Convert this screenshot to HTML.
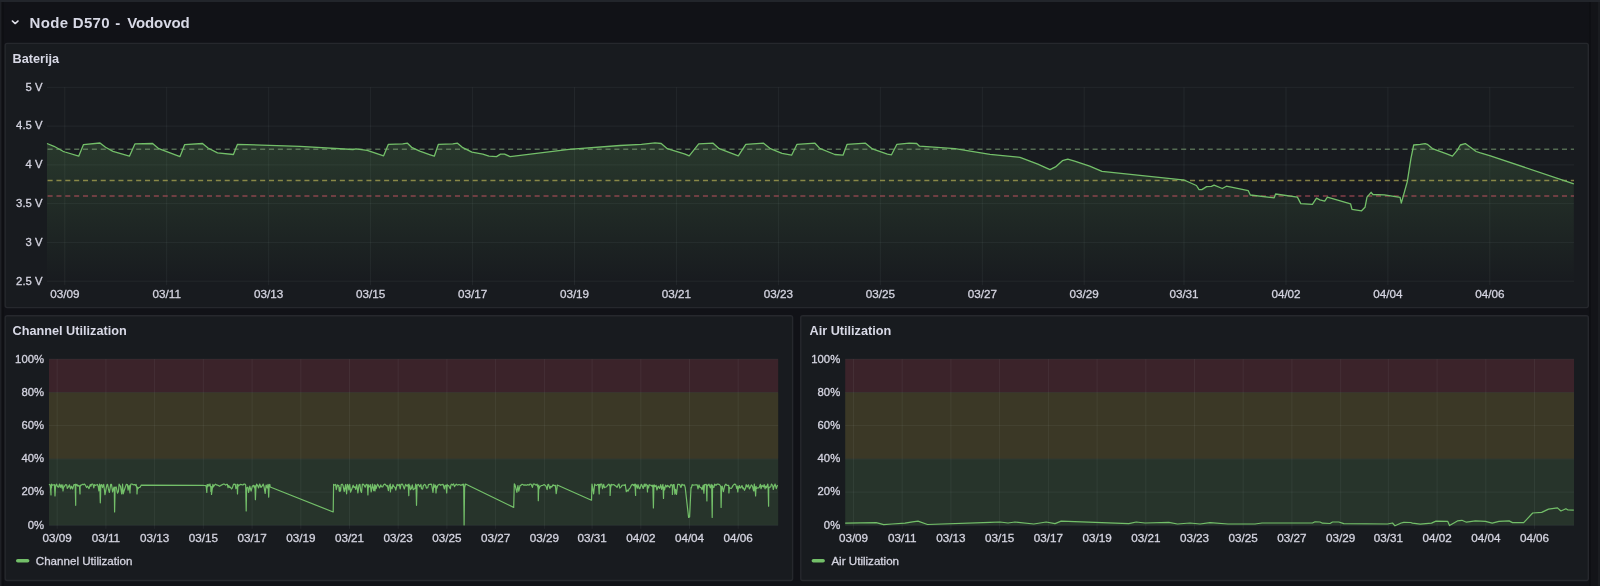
<!DOCTYPE html>
<html><head><meta charset="utf-8"><title>Node D570 - Vodovod</title>
<style>
html,body{margin:0;padding:0;width:1600px;height:586px;overflow:hidden;background:#111217;}
svg{display:block;font-family:"Liberation Sans", sans-serif;will-change:transform;}
.hd{font-size:15px;font-weight:bold;fill:#d8d9e6;}
.pt{font-size:12.7px;font-weight:bold;fill:#d8d9e6;}
.ax{font-size:11.3px;fill:#d4d4e0;stroke:#d4d4e0;stroke-width:0.3px;}
.lg{font-size:11.6px;fill:#d4d4e0;stroke:#d4d4e0;stroke-width:0.3px;}
.axx{font-size:11.7px;fill:#d4d4e0;stroke:#d4d4e0;stroke-width:0.3px;}
</style></head><body>
<svg width="1600" height="586" viewBox="0 0 1600 586">
<defs><linearGradient id="gfill" gradientUnits="userSpaceOnUse" x1="0" y1="87.3" x2="0" y2="281.2"><stop offset="0" stop-color="#73bf69" stop-opacity="0.25"/><stop offset="1" stop-color="#73bf69" stop-opacity="0"/></linearGradient></defs>
<rect x="0" y="0" width="1600" height="2" fill="#22252b"/>
<rect x="0" y="2" width="1" height="584" fill="#1e2025"/><rect x="1" y="2" width="1" height="584" fill="#15161a"/><rect x="2" y="2" width="2" height="584" fill="#0e0f13"/>
<rect x="1589" y="2" width="2" height="584" fill="#0e0f13"/><rect x="1591" y="2" width="7" height="584" fill="#131418"/><rect x="1598" y="2" width="2" height="584" fill="#1a1c20"/>
<path d="M12.3,20.9 L15.2,23.6 L18.1,20.9" fill="none" stroke="#e2e2ec" stroke-width="1.45" stroke-linecap="round" stroke-linejoin="round"/>
<text x="29.6" y="27.5" class="hd" letter-spacing="0.3">Node D570</text><text x="115.3" y="27.5" class="hd">-</text><text x="127.2" y="27.5" class="hd" letter-spacing="-0.1">Vodovod</text>
<rect x="5.2" y="43.4" width="1583.1" height="264.2" rx="2" fill="#181b1f" stroke="#26282d" stroke-width="1.4"/>
<text x="12.5" y="62.8" class="pt">Baterija</text>
<line x1="47" y1="87.3" x2="1574" y2="87.3" stroke="rgba(240,250,255,0.055)"/>
<text x="42.5" y="90.6" class="ax" text-anchor="end">5 V</text>
<line x1="47" y1="126.1" x2="1574" y2="126.1" stroke="rgba(240,250,255,0.055)"/>
<text x="42.5" y="129.4" class="ax" text-anchor="end">4.5 V</text>
<line x1="47" y1="164.9" x2="1574" y2="164.9" stroke="rgba(240,250,255,0.055)"/>
<text x="42.5" y="168.2" class="ax" text-anchor="end">4 V</text>
<line x1="47" y1="203.6" x2="1574" y2="203.6" stroke="rgba(240,250,255,0.055)"/>
<text x="42.5" y="206.9" class="ax" text-anchor="end">3.5 V</text>
<line x1="47" y1="242.4" x2="1574" y2="242.4" stroke="rgba(240,250,255,0.055)"/>
<text x="42.5" y="245.7" class="ax" text-anchor="end">3 V</text>
<line x1="47" y1="281.2" x2="1574" y2="281.2" stroke="rgba(240,250,255,0.055)"/>
<text x="42.5" y="284.5" class="ax" text-anchor="end">2.5 V</text>
<line x1="64.8" y1="87.3" x2="64.8" y2="285.2" stroke="rgba(240,250,255,0.055)"/>
<text x="64.8" y="297.6" class="axx" text-anchor="middle">03/09</text>
<line x1="166.7" y1="87.3" x2="166.7" y2="285.2" stroke="rgba(240,250,255,0.055)"/>
<text x="166.7" y="297.6" class="axx" text-anchor="middle">03/11</text>
<line x1="268.7" y1="87.3" x2="268.7" y2="285.2" stroke="rgba(240,250,255,0.055)"/>
<text x="268.7" y="297.6" class="axx" text-anchor="middle">03/13</text>
<line x1="370.6" y1="87.3" x2="370.6" y2="285.2" stroke="rgba(240,250,255,0.055)"/>
<text x="370.6" y="297.6" class="axx" text-anchor="middle">03/15</text>
<line x1="472.6" y1="87.3" x2="472.6" y2="285.2" stroke="rgba(240,250,255,0.055)"/>
<text x="472.6" y="297.6" class="axx" text-anchor="middle">03/17</text>
<line x1="574.5" y1="87.3" x2="574.5" y2="285.2" stroke="rgba(240,250,255,0.055)"/>
<text x="574.5" y="297.6" class="axx" text-anchor="middle">03/19</text>
<line x1="676.4" y1="87.3" x2="676.4" y2="285.2" stroke="rgba(240,250,255,0.055)"/>
<text x="676.4" y="297.6" class="axx" text-anchor="middle">03/21</text>
<line x1="778.4" y1="87.3" x2="778.4" y2="285.2" stroke="rgba(240,250,255,0.055)"/>
<text x="778.4" y="297.6" class="axx" text-anchor="middle">03/23</text>
<line x1="880.3" y1="87.3" x2="880.3" y2="285.2" stroke="rgba(240,250,255,0.055)"/>
<text x="880.3" y="297.6" class="axx" text-anchor="middle">03/25</text>
<line x1="982.3" y1="87.3" x2="982.3" y2="285.2" stroke="rgba(240,250,255,0.055)"/>
<text x="982.3" y="297.6" class="axx" text-anchor="middle">03/27</text>
<line x1="1084.2" y1="87.3" x2="1084.2" y2="285.2" stroke="rgba(240,250,255,0.055)"/>
<text x="1084.2" y="297.6" class="axx" text-anchor="middle">03/29</text>
<line x1="1184.0" y1="87.3" x2="1184.0" y2="285.2" stroke="rgba(240,250,255,0.055)"/>
<text x="1184.0" y="297.6" class="axx" text-anchor="middle">03/31</text>
<line x1="1286.0" y1="87.3" x2="1286.0" y2="285.2" stroke="rgba(240,250,255,0.055)"/>
<text x="1286.0" y="297.6" class="axx" text-anchor="middle">04/02</text>
<line x1="1387.9" y1="87.3" x2="1387.9" y2="285.2" stroke="rgba(240,250,255,0.055)"/>
<text x="1387.9" y="297.6" class="axx" text-anchor="middle">04/04</text>
<line x1="1489.8" y1="87.3" x2="1489.8" y2="285.2" stroke="rgba(240,250,255,0.055)"/>
<text x="1489.8" y="297.6" class="axx" text-anchor="middle">04/06</text>
<polygon points="47.0,143.5 54.0,146.3 63.0,151.3 65.0,152.0 78.7,156.2 83.5,144.6 100.0,143.0 105.5,147.3 113.0,151.4 129.4,156.2 134.9,143.9 152.6,143.5 158.8,148.7 180.0,156.6 184.7,144.6 202.5,143.5 208.0,148.0 217.5,152.8 233.4,154.5 237.5,144.3 300.0,146.3 352.9,149.5 356.0,148.8 367.2,150.3 383.6,155.8 388.4,144.3 402.7,143.9 407.5,143.2 411.6,147.3 419.8,151.1 430.2,154.8 434.3,156.2 438.4,144.3 452.8,143.9 457.5,143.2 462.3,147.3 471.9,152.1 482.8,154.1 489.0,156.2 496.5,156.6 500.5,154.1 504.6,154.1 510.1,156.6 569.0,149.3 620.0,145.5 641.4,144.3 655.0,142.9 661.2,143.5 667.3,148.7 685.1,154.1 689.2,155.9 698.7,143.9 713.1,143.2 719.2,148.7 738.3,155.8 745.8,144.3 763.6,143.2 770.4,148.7 782.0,153.4 791.6,155.2 797.0,144.3 815.0,143.2 819.8,148.4 834.8,154.5 843.0,155.2 847.1,144.3 865.5,143.2 872.4,148.9 887.4,154.1 891.5,154.8 896.9,144.3 909.2,143.2 916.7,143.5 919.5,146.2 955.0,148.7 990.0,154.3 1020.0,157.3 1037.8,164.1 1050.0,169.6 1055.5,166.9 1062.4,160.7 1067.8,159.1 1074.6,161.1 1089.7,166.2 1102.0,171.4 1182.5,179.8 1184.0,180.0 1196.4,185.5 1199.1,189.6 1201.8,189.6 1206.6,186.6 1211.4,186.3 1214.1,185.2 1222.3,188.5 1226.4,186.2 1248.3,190.7 1250.3,195.0 1274.2,197.8 1275.6,194.0 1297.4,197.1 1300.8,203.6 1312.4,204.3 1316.5,198.1 1319.9,199.8 1324.7,201.2 1327.4,197.1 1350.6,203.9 1352.0,209.4 1361.6,210.8 1365.0,207.3 1367.0,197.1 1371.1,192.3 1372.9,194.5 1384.3,194.8 1400.1,197.4 1401.3,203.1 1407.3,181.6 1410.9,158.7 1413.7,145.0 1420.2,144.3 1425.2,143.6 1427.3,144.3 1432.4,148.6 1447.4,154.1 1452.4,156.1 1457.4,150.1 1460.3,145.0 1465.3,143.6 1476.1,151.5 1480.4,152.9 1490.4,155.8 1573.8,183.8 1573.8,281.2 47.0,281.2" fill="url(#gfill)"/>
<line x1="47.58" y1="149.3" x2="1574" y2="149.3" stroke="rgba(135,175,125,0.55)" stroke-width="1.45" stroke-dasharray="5.05,3.806"/>
<line x1="47.58" y1="180.4" x2="1574" y2="180.4" stroke="rgba(200,190,90,0.62)" stroke-width="1.45" stroke-dasharray="5.05,3.806"/>
<line x1="47.58" y1="195.9" x2="1574" y2="195.9" stroke="rgba(200,85,100,0.62)" stroke-width="1.45" stroke-dasharray="5.05,3.806"/>
<polyline points="47.0,143.5 54.0,146.3 63.0,151.3 65.0,152.0 78.7,156.2 83.5,144.6 100.0,143.0 105.5,147.3 113.0,151.4 129.4,156.2 134.9,143.9 152.6,143.5 158.8,148.7 180.0,156.6 184.7,144.6 202.5,143.5 208.0,148.0 217.5,152.8 233.4,154.5 237.5,144.3 300.0,146.3 352.9,149.5 356.0,148.8 367.2,150.3 383.6,155.8 388.4,144.3 402.7,143.9 407.5,143.2 411.6,147.3 419.8,151.1 430.2,154.8 434.3,156.2 438.4,144.3 452.8,143.9 457.5,143.2 462.3,147.3 471.9,152.1 482.8,154.1 489.0,156.2 496.5,156.6 500.5,154.1 504.6,154.1 510.1,156.6 569.0,149.3 620.0,145.5 641.4,144.3 655.0,142.9 661.2,143.5 667.3,148.7 685.1,154.1 689.2,155.9 698.7,143.9 713.1,143.2 719.2,148.7 738.3,155.8 745.8,144.3 763.6,143.2 770.4,148.7 782.0,153.4 791.6,155.2 797.0,144.3 815.0,143.2 819.8,148.4 834.8,154.5 843.0,155.2 847.1,144.3 865.5,143.2 872.4,148.9 887.4,154.1 891.5,154.8 896.9,144.3 909.2,143.2 916.7,143.5 919.5,146.2 955.0,148.7 990.0,154.3 1020.0,157.3 1037.8,164.1 1050.0,169.6 1055.5,166.9 1062.4,160.7 1067.8,159.1 1074.6,161.1 1089.7,166.2 1102.0,171.4 1182.5,179.8 1184.0,180.0 1196.4,185.5 1199.1,189.6 1201.8,189.6 1206.6,186.6 1211.4,186.3 1214.1,185.2 1222.3,188.5 1226.4,186.2 1248.3,190.7 1250.3,195.0 1274.2,197.8 1275.6,194.0 1297.4,197.1 1300.8,203.6 1312.4,204.3 1316.5,198.1 1319.9,199.8 1324.7,201.2 1327.4,197.1 1350.6,203.9 1352.0,209.4 1361.6,210.8 1365.0,207.3 1367.0,197.1 1371.1,192.3 1372.9,194.5 1384.3,194.8 1400.1,197.4 1401.3,203.1 1407.3,181.6 1410.9,158.7 1413.7,145.0 1420.2,144.3 1425.2,143.6 1427.3,144.3 1432.4,148.6 1447.4,154.1 1452.4,156.1 1457.4,150.1 1460.3,145.0 1465.3,143.6 1476.1,151.5 1480.4,152.9 1490.4,155.8 1573.8,183.8" fill="none" stroke="#73bf69" stroke-width="1.3" stroke-linejoin="round"/>
<rect x="5.20" y="315.8" width="787.40" height="264.7" rx="2" fill="#181b1f" stroke="#26282d" stroke-width="1.4"/>
<text x="12.5" y="335.2" class="pt">Channel Utilization</text>
<rect x="49" y="359.2" width="729.2" height="33.2" fill="#3b232a"/>
<rect x="49" y="392.4" width="729.2" height="66.4" fill="#3b3826"/>
<rect x="49" y="458.9" width="729.2" height="66.4" fill="#27342b"/>
<line x1="49" y1="359.2" x2="778.2" y2="359.2" stroke="rgba(240,250,255,0.055)"/>
<text x="44.0" y="362.5" class="ax" text-anchor="end">100%</text>
<line x1="49" y1="392.4" x2="778.2" y2="392.4" stroke="rgba(240,250,255,0.055)"/>
<text x="44.0" y="395.7" class="ax" text-anchor="end">80%</text>
<line x1="49" y1="425.6" x2="778.2" y2="425.6" stroke="rgba(240,250,255,0.055)"/>
<text x="44.0" y="428.9" class="ax" text-anchor="end">60%</text>
<line x1="49" y1="458.9" x2="778.2" y2="458.9" stroke="rgba(240,250,255,0.055)"/>
<text x="44.0" y="462.2" class="ax" text-anchor="end">40%</text>
<line x1="49" y1="492.1" x2="778.2" y2="492.1" stroke="rgba(240,250,255,0.055)"/>
<text x="44.0" y="495.4" class="ax" text-anchor="end">20%</text>
<line x1="49" y1="525.3" x2="778.2" y2="525.3" stroke="rgba(240,250,255,0.055)"/>
<text x="44.0" y="528.6" class="ax" text-anchor="end">0%</text>
<line x1="57.2" y1="359.2" x2="57.2" y2="528.8" stroke="rgba(240,250,255,0.055)"/>
<text x="57.2" y="541.8" class="axx" text-anchor="middle">03/09</text>
<line x1="105.9" y1="359.2" x2="105.9" y2="528.8" stroke="rgba(240,250,255,0.055)"/>
<text x="105.9" y="541.8" class="axx" text-anchor="middle">03/11</text>
<line x1="154.6" y1="359.2" x2="154.6" y2="528.8" stroke="rgba(240,250,255,0.055)"/>
<text x="154.6" y="541.8" class="axx" text-anchor="middle">03/13</text>
<line x1="203.3" y1="359.2" x2="203.3" y2="528.8" stroke="rgba(240,250,255,0.055)"/>
<text x="203.3" y="541.8" class="axx" text-anchor="middle">03/15</text>
<line x1="252.1" y1="359.2" x2="252.1" y2="528.8" stroke="rgba(240,250,255,0.055)"/>
<text x="252.1" y="541.8" class="axx" text-anchor="middle">03/17</text>
<line x1="300.8" y1="359.2" x2="300.8" y2="528.8" stroke="rgba(240,250,255,0.055)"/>
<text x="300.8" y="541.8" class="axx" text-anchor="middle">03/19</text>
<line x1="349.5" y1="359.2" x2="349.5" y2="528.8" stroke="rgba(240,250,255,0.055)"/>
<text x="349.5" y="541.8" class="axx" text-anchor="middle">03/21</text>
<line x1="398.2" y1="359.2" x2="398.2" y2="528.8" stroke="rgba(240,250,255,0.055)"/>
<text x="398.2" y="541.8" class="axx" text-anchor="middle">03/23</text>
<line x1="446.9" y1="359.2" x2="446.9" y2="528.8" stroke="rgba(240,250,255,0.055)"/>
<text x="446.9" y="541.8" class="axx" text-anchor="middle">03/25</text>
<line x1="495.6" y1="359.2" x2="495.6" y2="528.8" stroke="rgba(240,250,255,0.055)"/>
<text x="495.6" y="541.8" class="axx" text-anchor="middle">03/27</text>
<line x1="544.4" y1="359.2" x2="544.4" y2="528.8" stroke="rgba(240,250,255,0.055)"/>
<text x="544.4" y="541.8" class="axx" text-anchor="middle">03/29</text>
<line x1="592.1" y1="359.2" x2="592.1" y2="528.8" stroke="rgba(240,250,255,0.055)"/>
<text x="592.1" y="541.8" class="axx" text-anchor="middle">03/31</text>
<line x1="640.8" y1="359.2" x2="640.8" y2="528.8" stroke="rgba(240,250,255,0.055)"/>
<text x="640.8" y="541.8" class="axx" text-anchor="middle">04/02</text>
<line x1="689.5" y1="359.2" x2="689.5" y2="528.8" stroke="rgba(240,250,255,0.055)"/>
<text x="689.5" y="541.8" class="axx" text-anchor="middle">04/04</text>
<line x1="738.2" y1="359.2" x2="738.2" y2="528.8" stroke="rgba(240,250,255,0.055)"/>
<text x="738.2" y="541.8" class="axx" text-anchor="middle">04/06</text>
<polyline points="49.0,484.2 50.1,484.9 50.5,487.6 51.0,495.0 51.0,484.8 51.5,487.8 51.6,484.1 52.3,485.3 53.0,485.0 54.4,484.6 54.5,485.8 55.0,496.0 55.5,486.7 55.8,485.4 56.6,484.2 57.4,486.5 58.5,487.1 59.5,484.1 60.3,487.3 61.2,484.7 62.0,488.1 62.5,487.8 62.8,484.8 63.0,491.0 63.5,487.5 64.1,486.9 65.5,484.7 66.7,484.8 67.3,488.3 68.4,486.9 69.5,484.9 70.5,488.8 71.5,486.2 72.6,489.0 73.9,484.6 75.0,484.7 75.2,485.4 75.7,505.3 75.8,484.1 76.2,485.4 77.0,484.4 77.9,486.2 78.8,485.4 79.5,486.3 80.0,494.0 80.1,486.8 80.5,485.2 81.0,485.4 82.4,484.3 83.2,484.8 84.3,484.0 85.2,484.9 86.6,487.5 87.6,486.2 89.0,488.6 90.2,484.6 90.9,486.2 91.5,484.3 92.4,484.0 93.1,484.6 93.8,487.8 94.5,484.6 95.4,485.4 96.8,484.8 97.4,484.5 98.2,486.5 98.9,490.8 99.6,484.0 99.8,485.7 100.3,502.8 100.6,494.6 100.8,485.2 101.8,484.6 102.5,487.6 103.7,484.4 105.0,494.6 106.2,488.2 107.0,484.6 107.6,484.4 108.4,488.9 109.4,492.5 110.7,484.4 111.5,484.3 112.6,491.9 113.6,488.4 114.1,487.0 114.3,488.7 114.6,512.0 115.1,487.4 115.5,487.4 116.2,487.0 117.5,493.2 118.4,491.5 119.1,484.2 120.5,486.4 121.7,494.0 122.6,484.2 123.2,493.9 124.2,490.5 125.5,486.6 126.3,484.4 127.4,484.7 128.1,490.2 129.1,485.4 129.5,487.7 130.0,493.0 130.0,490.8 130.5,485.5 131.0,484.0 132.0,484.0 133.2,484.8 134.4,484.5 135.4,485.3 136.1,484.4 136.5,487.1 136.9,487.5 137.0,494.0 137.5,487.0 138.0,488.7 138.9,487.5 139.9,487.4 141.0,485.5 141.2,485.1 203.2,485.3 203.5,485.4 204.9,485.5 205.8,485.6 206.3,487.1 206.8,492.5 207.1,484.7 207.3,487.0 208.1,484.3 208.9,486.1 210.0,484.0 210.4,485.9 210.8,487.5 210.9,491.5 211.4,486.5 211.5,494.4 212.9,484.4 213.5,486.8 214.2,485.5 215.5,484.2 216.8,485.1 217.5,485.1 218.4,485.5 219.5,486.3 220.8,485.4 221.8,484.9 223.1,484.2 224.1,484.2 224.8,484.3 225.7,485.2 226.5,484.3 227.4,484.4 228.0,487.7 228.8,485.5 229.5,487.3 230.5,487.2 231.5,488.9 232.3,488.1 233.4,484.6 234.1,484.1 235.3,484.3 235.9,488.6 237.0,486.4 237.1,484.4 237.5,494.0 237.9,484.3 238.0,486.4 238.9,485.5 240.3,484.4 241.6,484.6 242.2,484.8 243.2,484.8 243.8,484.1 244.7,484.0 245.6,484.9 245.7,485.4 246.2,511.0 246.6,488.0 246.7,487.7 247.8,487.2 248.6,492.4 249.8,486.1 251.1,491.2 252.3,486.4 253.3,485.3 254.5,487.8 254.9,485.6 255.4,499.7 255.9,488.1 255.9,487.9 256.6,484.2 257.5,485.3 258.6,487.9 259.7,484.0 261.0,487.5 262.0,486.2 263.2,484.1 264.0,486.6 265.2,493.5 266.1,485.1 267.3,487.9 268.0,484.4 268.2,487.8 268.7,497.1 269.2,484.9 269.2,485.1 269.8,484.4 270.2,487.0 333.2,512.0 333.6,484.3 334.2,485.3 335.6,484.4 336.3,489.7 337.4,484.8 338.7,486.3 338.8,485.3 339.2,491.0 339.7,487.5 339.8,491.5 340.6,490.7 341.2,484.8 342.1,484.2 343.0,485.3 343.6,488.5 344.3,491.5 345.6,484.6 346.6,493.8 347.4,484.4 348.1,485.3 348.9,489.9 349.7,484.3 350.6,492.1 351.9,488.7 353.2,485.2 353.9,487.4 355.1,486.9 355.7,489.4 356.7,484.5 357.9,492.8 359.0,484.9 359.9,484.3 360.7,490.7 361.5,492.5 362.4,484.3 363.1,484.1 363.9,484.9 365.2,487.2 366.1,484.6 367.0,484.4 367.4,486.2 367.9,495.0 368.4,484.8 368.4,487.6 369.5,486.6 370.3,484.6 371.2,492.0 372.5,484.1 373.7,490.7 374.5,486.4 374.8,484.6 375.0,491.0 375.5,485.5 376.1,488.6 377.5,484.2 378.2,485.1 379.6,487.9 380.8,484.9 381.4,486.7 382.7,486.9 383.5,485.0 384.6,484.1 385.6,484.6 386.4,486.0 387.3,485.5 388.4,490.7 389.2,485.5 389.9,485.0 390.3,484.0 390.4,492.0 390.9,486.7 391.3,487.3 392.1,488.8 392.9,484.5 393.8,486.6 395.1,487.5 395.8,490.1 397.1,484.4 398.3,485.5 399.3,484.4 400.2,488.8 401.0,484.3 402.3,484.1 403.0,485.4 404.3,489.0 405.6,484.3 407.0,486.1 408.1,484.6 408.3,486.9 408.8,495.6 409.0,484.0 409.3,487.7 409.8,485.5 410.5,489.7 411.4,488.5 412.3,484.8 413.2,489.7 414.1,489.1 415.1,488.3 415.7,484.1 416.0,485.3 416.5,505.3 417.0,486.9 417.0,485.2 418.3,484.4 419.7,486.8 420.9,484.4 421.5,488.7 422.6,489.1 423.4,485.5 424.7,484.4 425.7,485.5 426.4,488.2 427.7,487.8 428.5,484.6 429.8,484.3 431.0,484.1 431.6,484.5 433.0,492.5 433.8,484.2 434.8,487.3 435.5,486.1 435.6,485.0 436.0,493.0 436.5,486.5 436.7,488.5 437.9,485.3 438.7,484.6 439.9,484.4 440.7,485.4 441.7,484.6 443.1,484.4 444.4,489.0 445.1,485.3 446.2,485.4 446.3,489.1 446.7,493.0 447.2,484.3 447.2,485.8 448.6,485.5 449.4,487.3 450.3,488.8 450.9,485.0 451.7,484.2 452.5,485.0 453.6,484.0 454.5,486.6 455.3,485.3 456.3,484.2 457.3,485.0 457.9,485.1 458.9,484.5 460.2,484.9 461.1,485.4 462.5,484.3 463.6,486.6 463.7,484.0 464.1,525.0 464.6,487.8 465.5,484.0 513.7,507.4 514.3,483.8 515.0,484.8 516.2,489.7 516.9,492.4 517.9,485.5 518.8,491.2 520.1,485.3 520.9,485.4 522.1,484.3 523.1,484.6 523.8,485.2 525.1,484.9 526.3,485.3 527.0,484.9 528.1,484.7 529.1,485.1 530.1,484.0 531.2,484.4 532.4,487.4 533.2,484.2 533.9,484.1 534.8,484.1 535.9,485.2 537.1,484.1 537.8,487.2 538.1,485.5 538.3,500.7 538.8,485.1 538.9,489.0 540.0,486.6 541.4,485.5 542.8,485.3 544.1,484.6 545.3,485.4 546.1,486.4 547.1,489.7 547.9,484.5 548.6,484.3 549.9,488.7 550.7,486.3 551.7,487.1 553.0,484.9 554.3,485.6 555.4,485.3 556.2,493.7 557.1,487.3 557.2,485.0 591.5,500.2 592.0,484.0 592.5,486.8 593.6,493.8 594.7,484.0 595.4,485.0 596.3,485.4 597.0,485.0 597.6,484.6 598.3,484.4 598.7,486.4 599.2,494.0 599.4,484.3 599.7,487.8 600.5,484.2 601.8,484.2 602.5,488.6 603.7,484.4 604.4,487.7 605.2,487.3 606.6,486.7 607.9,484.9 608.8,484.1 609.6,485.8 610.1,484.9 610.1,495.5 610.6,487.9 611.4,484.3 612.5,485.0 613.7,484.5 614.6,485.4 615.8,486.0 617.1,487.4 618.3,484.4 619.0,484.1 619.8,488.1 621.1,486.8 622.1,485.3 623.2,485.0 624.5,485.4 625.2,484.4 626.3,491.6 627.2,490.1 628.0,491.2 629.2,488.9 630.1,488.1 631.4,485.2 632.5,484.3 633.6,485.5 634.3,484.2 635.1,487.2 635.6,495.5 635.6,484.2 636.1,485.0 636.3,485.1 637.4,488.2 638.0,484.6 639.3,488.7 639.9,488.7 641.3,484.3 642.0,485.4 643.2,488.5 644.3,484.2 645.0,486.6 645.9,484.0 646.7,485.1 647.0,485.0 647.5,492.0 647.6,485.5 648.0,487.0 648.6,487.9 649.2,484.7 650.4,485.1 651.4,485.4 652.1,486.5 652.7,485.2 652.9,487.5 653.4,508.0 653.9,485.2 654.1,484.8 655.1,486.6 656.1,485.3 656.9,490.0 657.7,487.5 658.3,486.2 659.6,488.4 660.7,484.6 661.6,489.3 662.9,484.3 663.0,485.9 663.5,498.5 663.7,490.8 664.0,487.2 664.6,489.8 665.6,485.2 666.8,487.0 667.6,485.3 668.8,486.5 669.7,487.7 670.4,485.4 671.2,484.5 671.9,485.5 672.4,486.5 672.4,494.5 672.9,487.6 673.1,484.5 674.1,484.5 674.9,494.2 675.6,489.4 676.5,494.4 677.7,484.3 678.8,484.3 679.7,484.6 680.9,487.5 682.0,484.2 683.1,485.2 684.4,484.9 685.2,487.5 688.6,517.5 689.6,517.0 691.0,487.5 691.4,487.9 692.2,484.7 693.3,485.1 694.6,485.0 695.9,484.8 697.2,484.9 698.0,488.8 699.0,484.9 700.0,487.5 701.1,487.6 702.1,489.7 703.2,485.2 703.9,493.1 704.5,484.6 705.2,484.7 706.3,484.4 706.4,486.5 706.9,500.9 707.1,488.8 707.4,485.2 708.1,485.3 709.0,484.2 710.3,487.9 711.2,484.4 711.7,486.1 712.2,517.5 712.6,485.0 712.7,486.7 713.9,487.4 714.7,484.2 716.0,485.4 716.8,484.4 717.7,484.0 718.9,484.4 719.7,484.7 720.6,486.3 720.8,487.1 721.1,507.4 721.6,487.0 722.2,486.2 723.4,491.7 724.2,487.9 724.8,485.5 725.9,484.2 726.6,485.2 727.5,485.4 728.4,485.4 728.7,485.4 728.9,493.0 729.4,487.4 729.8,488.0 731.1,488.5 731.9,487.6 733.1,485.4 734.1,484.4 734.8,484.1 735.8,484.8 736.8,488.6 737.3,486.1 737.4,487.4 737.8,492.0 738.3,486.9 738.5,488.5 739.4,485.5 740.0,487.9 740.6,488.0 742.0,485.6 743.0,488.7 743.6,487.9 744.5,490.3 745.5,488.3 746.2,484.7 747.3,486.9 748.5,484.8 749.4,488.9 750.5,487.0 751.3,484.9 752.4,486.1 753.6,490.9 754.3,484.0 755.0,491.1 755.1,486.9 755.6,496.0 756.1,486.3 756.1,488.7 757.2,487.9 758.4,488.0 759.2,487.4 760.4,484.3 761.0,488.7 762.1,485.3 763.4,486.8 764.2,484.5 765.1,488.8 765.8,486.1 766.5,487.7 767.8,484.0 768.1,486.2 768.6,506.2 768.7,488.8 769.1,487.4 770.1,487.2 770.8,486.6 771.5,484.0 772.7,485.5 773.3,489.5 773.9,486.7 775.1,484.1 776.3,488.6 777.5,485.0" fill="none" stroke="#73bf69" stroke-width="1.2" stroke-linejoin="round"/>
<line x1="17.8" y1="560.8" x2="27.6" y2="560.8" stroke="#73bf69" stroke-width="3.6" stroke-linecap="round"/>
<text x="35.8" y="564.8" class="lg">Channel Utilization</text>
<rect x="800.75" y="315.8" width="787.55" height="264.7" rx="2" fill="#181b1f" stroke="#26282d" stroke-width="1.4"/>
<text x="809.5" y="335.2" class="pt">Air Utilization</text>
<rect x="845.2" y="359.2" width="728.8" height="33.2" fill="#3b232a"/>
<rect x="845.2" y="392.4" width="728.8" height="66.4" fill="#3b3826"/>
<rect x="845.2" y="458.9" width="728.8" height="66.4" fill="#27342b"/>
<line x1="845.2" y1="359.2" x2="1574" y2="359.2" stroke="rgba(240,250,255,0.055)"/>
<text x="840.2" y="362.5" class="ax" text-anchor="end">100%</text>
<line x1="845.2" y1="392.4" x2="1574" y2="392.4" stroke="rgba(240,250,255,0.055)"/>
<text x="840.2" y="395.7" class="ax" text-anchor="end">80%</text>
<line x1="845.2" y1="425.6" x2="1574" y2="425.6" stroke="rgba(240,250,255,0.055)"/>
<text x="840.2" y="428.9" class="ax" text-anchor="end">60%</text>
<line x1="845.2" y1="458.9" x2="1574" y2="458.9" stroke="rgba(240,250,255,0.055)"/>
<text x="840.2" y="462.2" class="ax" text-anchor="end">40%</text>
<line x1="845.2" y1="492.1" x2="1574" y2="492.1" stroke="rgba(240,250,255,0.055)"/>
<text x="840.2" y="495.4" class="ax" text-anchor="end">20%</text>
<line x1="845.2" y1="525.3" x2="1574" y2="525.3" stroke="rgba(240,250,255,0.055)"/>
<text x="840.2" y="528.6" class="ax" text-anchor="end">0%</text>
<line x1="853.5" y1="359.2" x2="853.5" y2="528.8" stroke="rgba(240,250,255,0.055)"/>
<text x="853.5" y="541.8" class="axx" text-anchor="middle">03/09</text>
<line x1="902.2" y1="359.2" x2="902.2" y2="528.8" stroke="rgba(240,250,255,0.055)"/>
<text x="902.2" y="541.8" class="axx" text-anchor="middle">03/11</text>
<line x1="950.9" y1="359.2" x2="950.9" y2="528.8" stroke="rgba(240,250,255,0.055)"/>
<text x="950.9" y="541.8" class="axx" text-anchor="middle">03/13</text>
<line x1="999.6" y1="359.2" x2="999.6" y2="528.8" stroke="rgba(240,250,255,0.055)"/>
<text x="999.6" y="541.8" class="axx" text-anchor="middle">03/15</text>
<line x1="1048.4" y1="359.2" x2="1048.4" y2="528.8" stroke="rgba(240,250,255,0.055)"/>
<text x="1048.4" y="541.8" class="axx" text-anchor="middle">03/17</text>
<line x1="1097.1" y1="359.2" x2="1097.1" y2="528.8" stroke="rgba(240,250,255,0.055)"/>
<text x="1097.1" y="541.8" class="axx" text-anchor="middle">03/19</text>
<line x1="1145.8" y1="359.2" x2="1145.8" y2="528.8" stroke="rgba(240,250,255,0.055)"/>
<text x="1145.8" y="541.8" class="axx" text-anchor="middle">03/21</text>
<line x1="1194.5" y1="359.2" x2="1194.5" y2="528.8" stroke="rgba(240,250,255,0.055)"/>
<text x="1194.5" y="541.8" class="axx" text-anchor="middle">03/23</text>
<line x1="1243.2" y1="359.2" x2="1243.2" y2="528.8" stroke="rgba(240,250,255,0.055)"/>
<text x="1243.2" y="541.8" class="axx" text-anchor="middle">03/25</text>
<line x1="1291.9" y1="359.2" x2="1291.9" y2="528.8" stroke="rgba(240,250,255,0.055)"/>
<text x="1291.9" y="541.8" class="axx" text-anchor="middle">03/27</text>
<line x1="1340.7" y1="359.2" x2="1340.7" y2="528.8" stroke="rgba(240,250,255,0.055)"/>
<text x="1340.7" y="541.8" class="axx" text-anchor="middle">03/29</text>
<line x1="1388.3" y1="359.2" x2="1388.3" y2="528.8" stroke="rgba(240,250,255,0.055)"/>
<text x="1388.3" y="541.8" class="axx" text-anchor="middle">03/31</text>
<line x1="1437.1" y1="359.2" x2="1437.1" y2="528.8" stroke="rgba(240,250,255,0.055)"/>
<text x="1437.1" y="541.8" class="axx" text-anchor="middle">04/02</text>
<line x1="1485.8" y1="359.2" x2="1485.8" y2="528.8" stroke="rgba(240,250,255,0.055)"/>
<text x="1485.8" y="541.8" class="axx" text-anchor="middle">04/04</text>
<line x1="1534.5" y1="359.2" x2="1534.5" y2="528.8" stroke="rgba(240,250,255,0.055)"/>
<text x="1534.5" y="541.8" class="axx" text-anchor="middle">04/06</text>
<polyline points="845.2,523.2 876.2,522.7 883.7,524.6 892.0,524.0 905.0,523.2 912.5,521.8 918.0,521.1 927.5,524.5 990.0,522.4 1000.0,522.0 1008.0,523.0 1015.0,522.0 1033.8,524.0 1046.2,522.0 1055.0,523.6 1061.2,521.1 1128.8,523.6 1136.2,522.0 1145.0,523.0 1168.8,522.4 1177.5,524.0 1190.0,523.0 1200.0,524.0 1210.0,522.7 1228.0,524.0 1255.0,524.0 1262.0,523.0 1312.5,523.0 1315.0,521.8 1320.0,522.0 1322.5,523.2 1330.0,523.5 1332.5,522.0 1338.8,522.0 1343.8,523.6 1387.5,524.0 1392.5,523.0 1395.0,525.8 1401.2,523.0 1403.8,522.4 1410.6,522.5 1412.4,523.1 1420.2,524.2 1431.5,523.1 1436.0,521.1 1447.8,521.4 1449.5,525.6 1457.4,520.9 1461.9,520.3 1466.4,522.2 1475.4,520.9 1485.5,521.4 1492.2,523.1 1499.0,521.4 1509.1,520.9 1512.5,522.6 1523.7,522.6 1532.7,513.0 1541.7,512.4 1548.5,509.1 1557.5,507.9 1560.9,511.0 1565.9,508.7 1568.0,510.0 1573.8,510.2" fill="none" stroke="#73bf69" stroke-width="1.2" stroke-linejoin="round"/>
<line x1="813.4" y1="560.8" x2="823.1" y2="560.8" stroke="#73bf69" stroke-width="3.6" stroke-linecap="round"/>
<text x="831.4" y="564.8" class="lg">Air Utilization</text>
</svg>
</body></html>
